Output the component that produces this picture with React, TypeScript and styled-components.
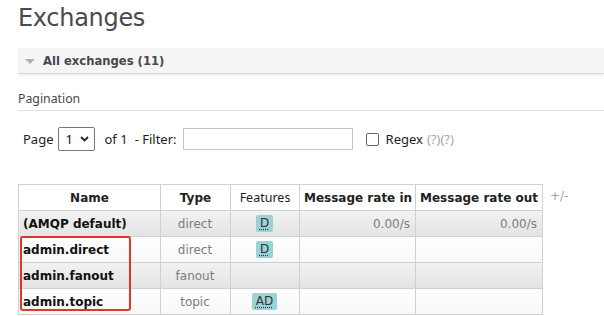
import React from "react";
import styled, { createGlobalStyle } from "styled-components";

const Global = createGlobalStyle`
  html, body { margin: 0; padding: 0; background: #fff; }
  body { font-family: "DejaVu Sans", Verdana, sans-serif; color: #484848; }
`;

const Page = styled.div`
  padding: 3px 0 0 18px;
  width: 586px;
`;

const Title = styled.h1`
  margin: 0;
  font-family: "DejaVu Sans", Verdana, sans-serif;
  font-weight: normal;
  font-size: 24px;
  line-height: 30px;
  height: 30px;
  color: #4a4a4a;
  letter-spacing: -0.3px;
`;

const SectionBar = styled.div`
  margin-top: 15px;
  height: 25px;
  background: #f5f5f5;
  border-bottom: 1px solid #d9d9d9;
  display: flex;
  align-items: center;
  gap: 8px;
  padding-left: 7px;
  box-shadow: 0 3px 0 -1px #f2f2f2;
`;

const Triangle = styled.span`
  width: 0;
  height: 0;
  border-left: 5px solid transparent;
  border-right: 5px solid transparent;
  border-top: 5px solid #b0b0b0;
  margin-top: 1px;
`;

const SectionTitle = styled.span`
  font-weight: bold;
  font-size: 11.6px;
  color: #484848;
`;

const SubHeading = styled.div`
  margin-top: 16px;
  font-family: "Noto Sans", sans-serif;
  font-size: 12.3px;
  line-height: 17px;
  color: #484848;
  padding-bottom: 3px;
  border-bottom: 1px solid #e2e2e2;
`;

const Controls = styled.div`
  margin-top: 16px;
  display: flex;
  align-items: center;
  font-family: "Noto Sans", sans-serif;
  font-size: 13px;
  color: #222;
  padding-left: 5px;
  height: 24px;
`;

const Label = styled.span<{ $ml?: number }>`
  margin-left: ${(p) => p.$ml ?? 0}px;
  color: #222;
`;

const SelectBox = styled.div`
  margin-left: 4px;
  border: 1px solid #767676;
  border-radius: 2px;
  display: flex;
  align-items: center;
  justify-content: space-between;
  padding: 0 5px 0 7px;
  box-sizing: border-box;
  width: 37px;
  height: 24px;
  font-size: 13px;
  color: #111;
`;

const Caret = styled.svg`
  width: 9px;
  height: 6px;
`;

const FilterInput = styled.div`
  margin-left: 6px;
  width: 170px;
  height: 22px;
  box-sizing: border-box;
  border: 1px solid #c6c6c6;
  background: #fff;
`;

const CheckBox = styled.span`
  margin-left: 13px;
  width: 13px;
  height: 13px;
  box-sizing: border-box;
  border: 1px solid #666;
  border-radius: 2px;
`;

const Help = styled.span`
  color: #a8a8a8;
  margin-left: 4px;
`;

const TableArea = styled.div`
  margin-top: 33px;
  display: flex;
  align-items: flex-start;
`;

const TableWrap = styled.div`
  position: relative;
`;

const Table = styled.table`
  border-collapse: collapse;
  table-layout: fixed;
  width: 524px;
  font-size: 12px;
`;

const Th = styled.th<{ $regular?: boolean }>`
  height: 25px;
  padding: 0 4px;
  border: 1px solid #d0d0d0;
  background: #fff;
  font-family: ${(p) => (p.$regular ? `"Noto Sans", sans-serif` : `"DejaVu Sans", Verdana, sans-serif`)};
  font-weight: ${(p) => (p.$regular ? "normal" : "bold")};
  font-size: ${(p) => (p.$regular ? "12.5px" : "12px")};
  color: #222;
  text-align: center;
  white-space: nowrap;
`;

const Tr = styled.tr<{ $alt: boolean }>`
  background: ${(p) =>
    p.$alt ? "linear-gradient(#f2f2f2, #e3e3e3)" : "linear-gradient(#fff, #f7f7f7)"};
`;

const Td = styled.td<{ $align?: "left" | "center" | "right"; $bold?: boolean; $muted?: boolean }>`
  height: 25px;
  padding: 0 5px 0 4px;
  border: 1px solid #d0d0d0;
  text-align: ${(p) => p.$align ?? "left"};
  font-weight: ${(p) => (p.$bold ? "bold" : "normal")};
  color: ${(p) => (p.$muted ? "#7c7c7c" : "#111")};
  white-space: nowrap;
`;

const Badge = styled.abbr`
  display: inline-block;
  background: #99d3d5;
  color: #333;
  padding: 0 4px;
  line-height: 17px;
  border-radius: 2px;
  text-decoration: underline dotted;
  text-underline-offset: 2px;
  font-size: 12px;
`;

const PlusMinus = styled.span`
  margin-left: 7px;
  margin-top: 5px;
  font-size: 12px;
  color: #a0a0a0;
`;

const Highlight = styled.div`
  position: absolute;
  left: 2px;
  top: 52px;
  width: 111px;
  height: 75px;
  box-sizing: border-box;
  border: 2px solid #e0352b;
  border-radius: 3px;
  pointer-events: none;
`;

type Row = { name: string; type: string; features: string; rin: string; rout: string };

const rows: Row[] = [
  { name: "(AMQP default)", type: "direct", features: "D", rin: "0.00/s", rout: "0.00/s" },
  { name: "admin.direct", type: "direct", features: "D", rin: "", rout: "" },
  { name: "admin.fanout", type: "fanout", features: "", rin: "", rout: "" },
  { name: "admin.topic", type: "topic", features: "AD", rin: "", rout: "" },
];

export default function App() {
  return (
    <>
      <Global />
      <Page>
        <Title>Exchanges</Title>
        <SectionBar>
          <Triangle />
          <SectionTitle>All exchanges (11)</SectionTitle>
        </SectionBar>
        <SubHeading>Pagination</SubHeading>
        <Controls>
          <Label>Page</Label>
          <SelectBox>
            <span>1</span>
            <Caret viewBox="0 0 9 6">
              <path d="M1 1 L4.5 4.5 L8 1" fill="none" stroke="#222" strokeWidth="1.8" />
            </Caret>
          </SelectBox>
          <Label $ml={10}>of 1</Label>
          <Label $ml={7}>- Filter:</Label>
          <FilterInput />
          <CheckBox />
          <Label $ml={7}>Regex</Label>
          <Help>(?)(?)</Help>
        </Controls>
        <TableArea>
          <TableWrap>
            <Table>
              <colgroup>
                <col style={{ width: 142 }} />
                <col style={{ width: 70 }} />
                <col style={{ width: 69 }} />
                <col style={{ width: 116 }} />
                <col style={{ width: 127 }} />
              </colgroup>
              <thead>
                <tr>
                  <Th>Name</Th>
                  <Th>Type</Th>
                  <Th $regular>Features</Th>
                  <Th>Message rate in</Th>
                  <Th>Message rate out</Th>
                </tr>
              </thead>
              <tbody>
                {rows.map((r, i) => (
                  <Tr key={r.name} $alt={i % 2 === 0}>
                    <Td $bold>{r.name}</Td>
                    <Td $align="center" $muted>{r.type}</Td>
                    <Td $align="center">{r.features && <Badge>{r.features}</Badge>}</Td>
                    <Td $align="right" $muted>{r.rin}</Td>
                    <Td $align="right" $muted>{r.rout}</Td>
                  </Tr>
                ))}
              </tbody>
            </Table>
            <Highlight />
          </TableWrap>
          <PlusMinus>+/-</PlusMinus>
        </TableArea>
      </Page>
    </>
  );
}
